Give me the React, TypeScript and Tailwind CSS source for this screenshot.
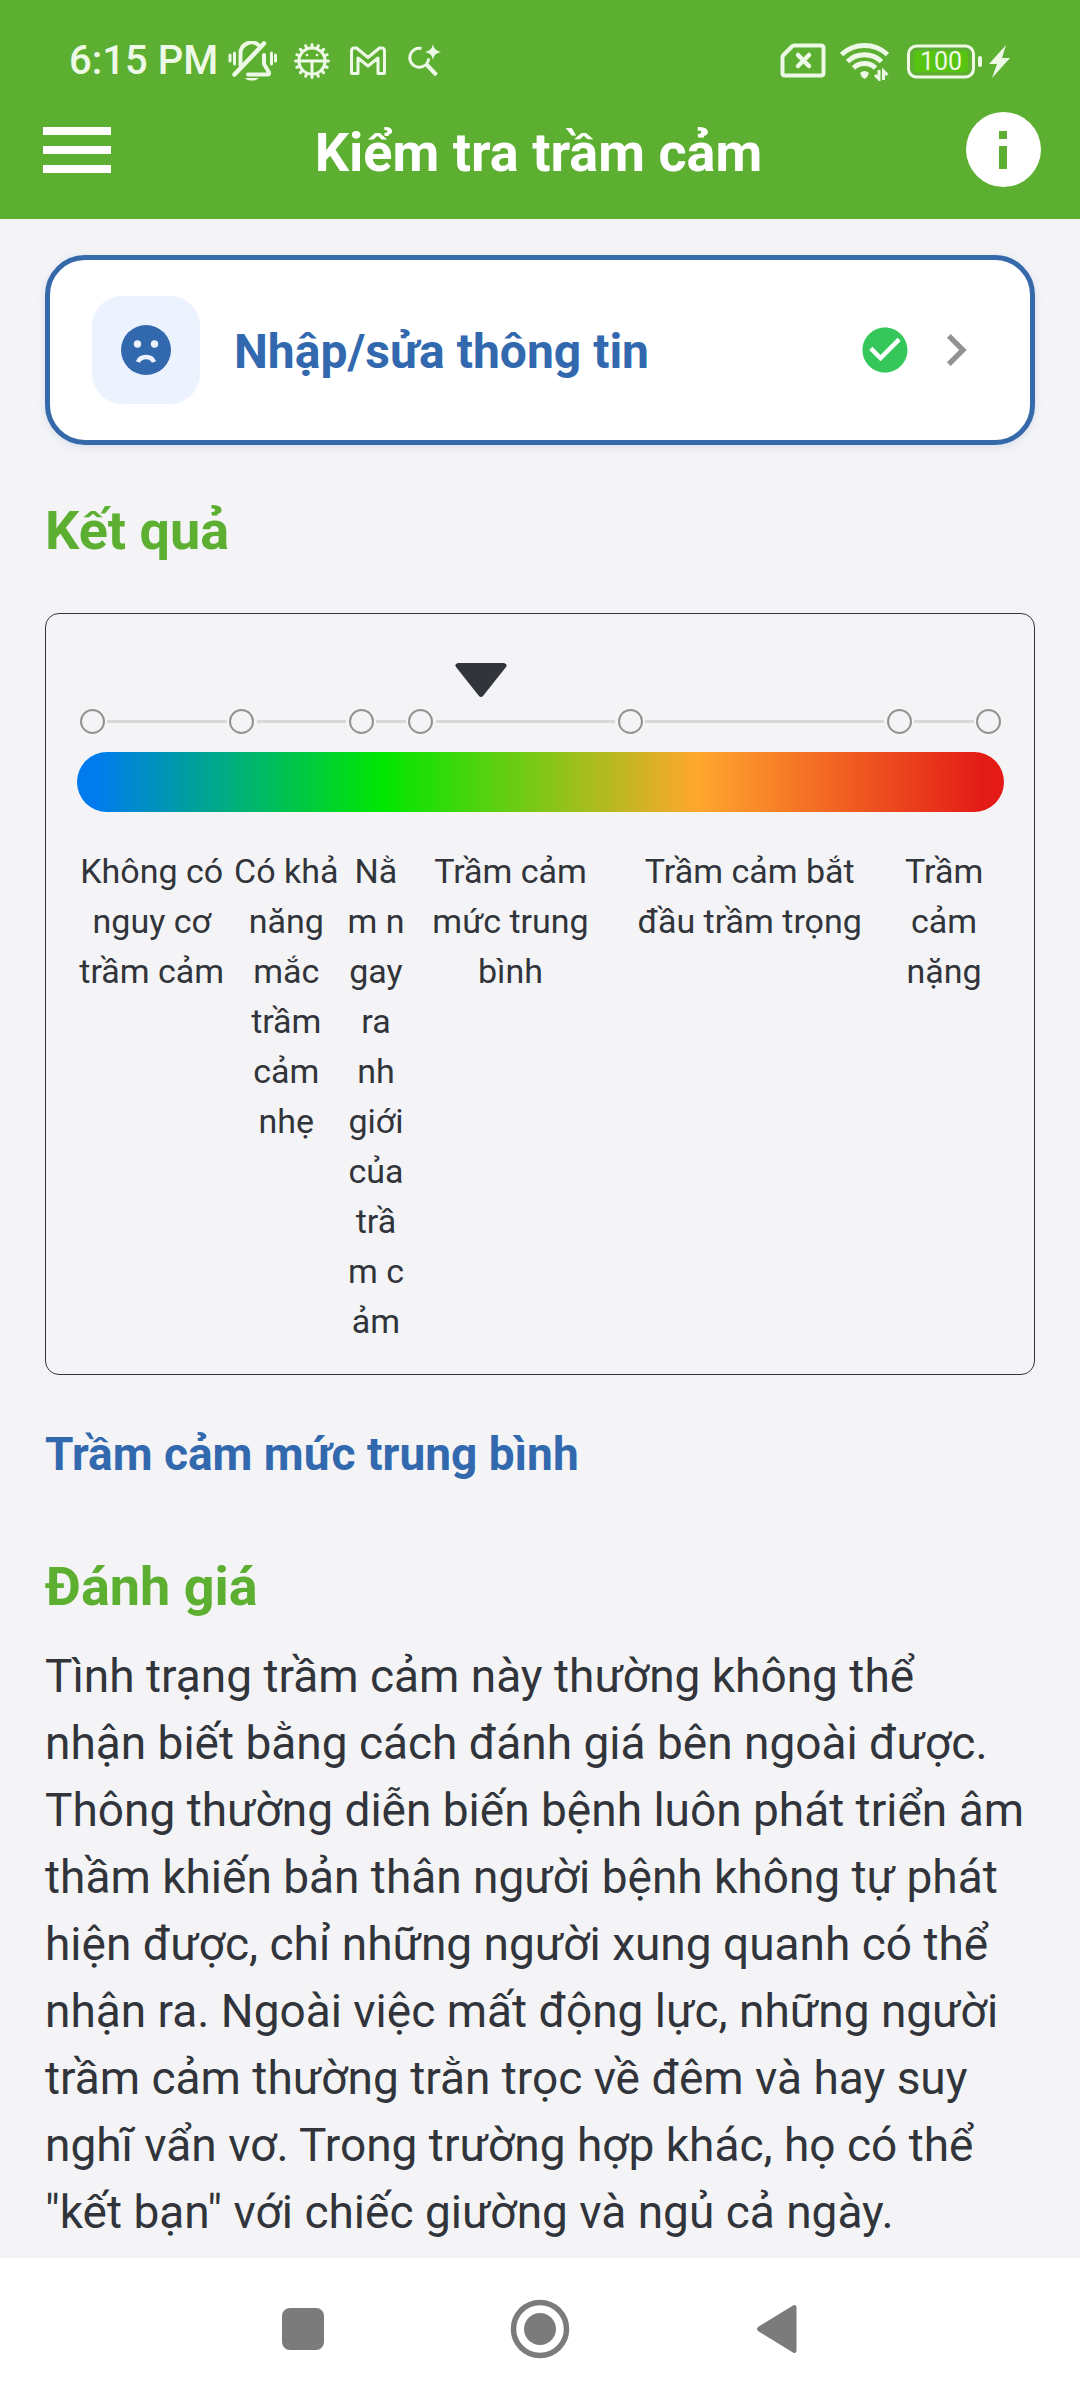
import React from "react";
import { MdCheckCircle, MdChevronRight } from "react-icons/md";

interface Level {
  units: number;
  label: string;
}

const LEVELS: Level[] = [
  { units: 5, label: "Không có\nnguy cơ\ntrầm cảm" },
  { units: 4, label: "Có khả\nnăng\nmắc\ntrầm\ncảm\nnhẹ" },
  { units: 2, label: "Nằ\nm n\ngay\nra\nnh\ngiới\ncủa\ntrầ\nm c\nảm" },
  { units: 7, label: "Trầm cảm\nmức trung\nbình" },
  { units: 9, label: "Trầm cảm bắt\nđầu trầm trọng" },
  { units: 3, label: "Trầm\ncảm\nnặng" },
];

const TOTAL_UNITS = 30;
const SCORE = 13;

const REVIEW = `Tình trạng trầm cảm này thường không thể
nhận biết bằng cách đánh giá bên ngoài được.
Thông thường diễn biến bệnh luôn phát triển âm
thầm khiến bản thân người bệnh không tự phát
hiện được, chỉ những người xung quanh có thể
nhận ra. Ngoài việc mất động lực, những người
trầm cảm thường trằn trọc về đêm và hay suy
nghĩ vẩn vơ. Trong trường hợp khác, họ có thể
"kết bạn" với chiếc giường và ngủ cả ngày.`;

const GEAR_TEETH = Array.from({ length: 16 }, (_, i) => i * 22.5);

const MutedBellIcon = () => (
  <svg width="50" height="40" viewBox="0 0 50 40" fill="none" stroke="currentColor" strokeLinecap="round">
    <path d="M2 14v6M6.5 12v11M43.5 12v11M47.5 14v6" strokeWidth="3" />
    <path d="M12.5 24V13a11 11 0 0 1 18-9" strokeWidth="4" />
    <path d="M6.5 33.5 36 2.5" strokeWidth="4.5" />
    <path d="M36 14v9l5 8.5q.5 2-1.5 2H20" strokeWidth="4" strokeLinejoin="round" />
    <path d="M17 37h14a8 5 0 0 1-14 0z" fill="currentColor" stroke="none" />
  </svg>
);

const GearIcon = () => (
  <svg width="36" height="38" viewBox="0 0 36 38" fill="none" stroke="currentColor">
    <circle cx="18" cy="19" r="13" strokeWidth="3" />
    {GEAR_TEETH.map((deg) => (
      <path key={deg} d="M18 5V2.5" strokeWidth="3" strokeLinecap="round" transform={`rotate(${deg} 18 19)`} />
    ))}
    <path d="M5 19h26M18 19v13" strokeWidth="3" />
    <circle cx="13" cy="13" r="1.3" fill="currentColor" stroke="none" />
    <circle cx="23" cy="13" r="1.3" fill="currentColor" stroke="none" />
  </svg>
);

const MailIcon = () => (
  <svg width="44" height="32" viewBox="0 0 44 32" fill="none" stroke="currentColor" strokeWidth="3" strokeLinejoin="round">
    <path d="M5.500 27.500V6q0-3 3-3h2L22 12.500 33.500 3h2q3 0 3 3v21.500q0 1-1 1H32V13l-10 8-10-8v15.500H6.500q-1 0-1-1z" />
  </svg>
);

const SparkSearchIcon = () => (
  <svg width="36" height="36" viewBox="0 0 36 36" fill="none" stroke="currentColor" strokeWidth="3">
    <path d="M15.5 5.5a9.5 9.5 0 1 0 6.5 13q.5-1.5.5-3" />
    <path d="M20 21l10.5 11" strokeWidth="4" />
    <path d="M27 1c1 5 3 6.500 8 8-5 1-7 3-8 8-1-5-3-7-8-8 5-1.500 7-3 8-8z" fill="currentColor" stroke="none" />
  </svg>
);

const NoSimIcon = () => (
  <svg width="48" height="36" viewBox="0 0 48 36" fill="none" stroke="currentColor" strokeLinejoin="round" strokeLinecap="round">
    <path d="M15 2.500h27q2.500 0 2.500 2.500v25q0 2.500-2.500 2.500H6q-2.500 0-2.500-2.500V14q0-1 1-2L13 3.500q1-1 2-1z" strokeWidth="4" />
    <path d="m19 12 11 11M30 12 19 23" strokeWidth="4.5" />
  </svg>
);

const WifiIcon = () => (
  <svg width="54" height="40" viewBox="0 0 54 40" fill="none" stroke="currentColor" strokeWidth="5">
    <path d="M2.5 13.5a34 34 0 0 1 46 0" />
    <path d="M8.5 20.5a25 25 0 0 1 34 0" />
    <path d="M14.5 27a16 16 0 0 1 22 0" />
    <path d="M21 32q4.500-4 9 0-1 4-4.500 6-3.500-2-4.500-6z" fill="currentColor" stroke="none" />
    <path d="M40 29v9l-4-4M44.5 39v-9l4 4" strokeWidth="3" />
  </svg>
);

const BatteryIcon = () => (
  <svg width="108" height="36" viewBox="0 0 108 36" fill="none">
    <rect x="3.5" y="3" width="65" height="31" rx="8" stroke="currentColor" strokeWidth="3" />
    <rect x="9" y="8" width="54" height="21" rx="3" fill="#56c411" />
    <rect x="73" y="13" width="4" height="11" rx="2" fill="currentColor" />
    <path d="m101 2-17 19h8l-5 14 18-20h-8z" fill="currentColor" />
    <text x="36" y="27" textAnchor="middle" fontSize="25" fontFamily="Roboto" fill="currentColor">
      100
    </text>
  </svg>
);

const SadFaceIcon = () => (
  <svg width="50" height="50" viewBox="0 0 50 50" fill="none">
    <circle cx="25" cy="25" r="25" fill="#3269ae" />
    <circle cx="16.5" cy="19" r="3.7" fill="#ecf3ff" />
    <circle cx="33.5" cy="19" r="3.7" fill="#ecf3ff" />
    <path d="M17 37q2-5 8-5t8 5" stroke="#ecf3ff" strokeWidth="4.5" />
  </svg>
);

const InfoIcon = () => (
  <svg width="75" height="75" viewBox="0 0 75 75">
    <circle cx="37.5" cy="37.5" r="37.5" fill="#fff" />
    <path d="M33 19h8v8h-8zM33 34h8v23h-8z" fill="#5daf31" />
  </svg>
);

const Header: React.FC = () => (
  <header className="bg-[#5daf31] pt-10 pb-8 text-white">
    <div className="flex h-[42px] items-center justify-between pr-[67px] pl-[69px] text-[#edf8e6]">
      <div className="flex items-center gap-4">
        <span className="-mr-1.5 text-[40px] leading-none font-medium">6:15 PM</span>
        <MutedBellIcon />
        <GearIcon />
        <MailIcon />
        <SparkSearchIcon />
      </div>
      <div className="flex items-center gap-3">
        <NoSimIcon />
        <WifiIcon />
        <BatteryIcon />
      </div>
    </div>
    <div className="mt-[30px] flex items-center justify-between pr-[39px] pl-[43px]">
      <button type="button" aria-label="Menu" className="flex w-[68px] flex-col gap-[11px]">
        <span className="h-2 w-full bg-white" />
        <span className="h-2 w-full bg-white" />
        <span className="h-2 w-full bg-white" />
      </button>
      <h1 className="pt-1.5 text-[54px] leading-none font-bold">Kiểm tra trầm cảm</h1>
      <button type="button" aria-label="Thông tin">
        <InfoIcon />
      </button>
    </div>
  </header>
);

const EditCard: React.FC = () => (
  <button
    type="button"
    className="flex w-full items-center rounded-[40px] border-[5px] border-[#3569aa] bg-white px-[42px] py-9 text-left shadow-[0_2px_8px_rgba(53,105,170,0.15)]"
  >
    <span className="flex size-[108px] items-center justify-center rounded-[30px] bg-[#ecf3ff]">
      <SadFaceIcon />
    </span>
    <span className="ml-[34px] flex-1 pt-1 text-[48px] leading-none font-bold text-[#3269ae]">
      Nhập/sửa thông tin
    </span>
    <MdCheckCircle className="size-[54px] text-[#35c759]" />
    <MdChevronRight className="ml-3 size-16 text-[#929292]" />
  </button>
);

const Stop = () => <span className="mx-auto block size-[25px] rounded-full border-2 border-[#929292]" />;

const ResultScale: React.FC = () => (
  <div className="rounded-[14px] border border-[#31343a] pt-[49px] pr-[30px] pb-7 pl-[31px]">
    <div className="relative mx-[15px] h-[34px]">
      <svg
        width="52"
        height="34"
        viewBox="0 0 52 34"
        className="absolute top-0 -ml-[26px]"
        style={{ left: `${(SCORE / TOTAL_UNITS) * 100}%` }}
      >
        <path d="M3 0h46q4 1 2 4L28 33q-2 2-4 0L1 4Q-1 1 3 0z" fill="#31343a" />
      </svg>
    </div>

    <div className="mt-3 flex items-center">
      {LEVELS.map(({ units, label }) => (
        <div key={label} className="flex min-w-0 items-center" style={{ flex: `${units} 1 0px` }}>
          <div className="w-[30px] shrink-0">
            <Stop />
          </div>
          <div className="h-[3px] flex-1 bg-[#d8d8d8]" />
        </div>
      ))}
      <div className="w-[30px] shrink-0">
        <Stop />
      </div>
    </div>

    <div className="mt-[18px] h-[60px] rounded-full bg-[linear-gradient(90deg,#007bee_2%,#00e700_33%,#ffa72e_67%,#e31a16_98%)]" />

    {/* the last label also covers the closing stop */}
    <div className="mt-[34px] flex">
      {LEVELS.map(({ units, label }, i) => (
        <p
          key={label}
          className="flex min-w-0 justify-center text-center text-[34px] leading-[50px] whitespace-pre"
          style={{ flex: `${units} 1 ${i === LEVELS.length - 1 ? 30 : 0}px` }}
        >
          {label}
        </p>
      ))}
    </div>
  </div>
);

const NavBar: React.FC = () => (
  <nav className="mt-auto flex h-[142px] items-center justify-center gap-[177px] bg-white text-[#7b7b7b]">
    <button type="button" aria-label="Recent apps" className="flex size-[60px] items-center justify-center">
      <span className="size-[42px] rounded-lg bg-[#7b7b7b]" />
    </button>
    <button type="button" aria-label="Home">
      <svg width="60" height="60" viewBox="0 0 60 60" fill="none">
        <circle cx="30" cy="30" r="26.5" stroke="currentColor" strokeWidth="5.5" />
        <circle cx="30" cy="30" r="16" fill="currentColor" />
      </svg>
    </button>
    <button type="button" aria-label="Back">
      <svg width="60" height="60" viewBox="0 0 60 60">
        <path d="M46 6.500q3-1.500 3.500 1.500v44q-.5 3-3.500 1.500L11 32q-2-2 0-4z" fill="currentColor" />
      </svg>
    </button>
  </nav>
);

export default function App() {
  return (
    <div className="flex min-h-screen flex-col bg-[#f4f4f7] font-[Roboto,sans-serif] text-[#31343a]">
      <Header />
      <main className="px-[45px] pt-9 pb-3">
        <EditCard />
        <h2 className="mt-[54px] text-[54px] leading-[64px] font-bold text-[#5daf31]">Kết quả</h2>
        <div className="mt-[50px]">
          <ResultScale />
        </div>
        <p className="mt-[47px] text-[46px] leading-[64px] font-bold text-[#3269ae]">Trầm cảm mức trung bình</p>
        <h2 className="mt-[69px] text-[54px] leading-[64px] font-bold text-[#5daf31]">Đánh giá</h2>
        <p className="mt-6 text-[46px] leading-[67px] whitespace-pre-line">{REVIEW}</p>
      </main>
      <NavBar />
    </div>
  );
}
